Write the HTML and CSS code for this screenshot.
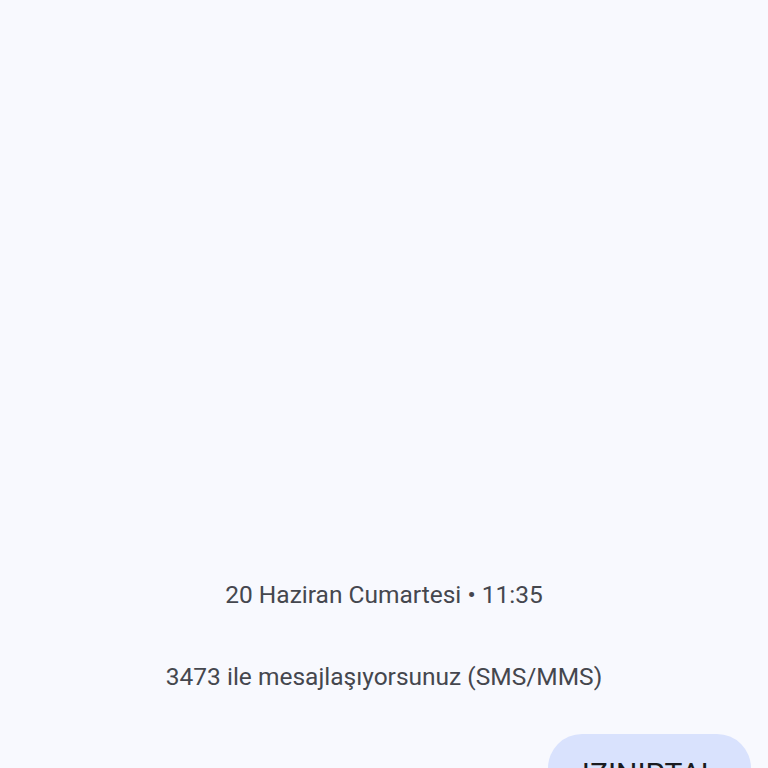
FILE: index.html
```html
<!DOCTYPE html>
<html lang="tr">
<head>
<meta charset="utf-8">
<link rel="stylesheet" href="styles.css">
</head>
<body>
<div class="screen">
  <div class="spacer"></div>
  <div class="date">20 Haziran Cumartesi • 11:35</div>
  <div class="info">3473 ile mesajlaşıyorsunuz (SMS/MMS)</div>
  <div class="row">
    <div class="bubble">IZINIPTAL</div>
  </div>
</div>
</body>
</html>
```
FILE: styles.css
```css
html, body {
  margin: 0;
  padding: 0;
  background: #f8f9fe;
}
.screen {
  width: 768px;
  height: 768px;
  overflow: hidden;
  display: flex;
  flex-direction: column;
  font-family: Roboto, "Noto Sans", sans-serif;
  color: #45474e;
}
.spacer {
  height: 578px;
  flex: none;
}
.date {
  text-align: center;
  font-size: 24.5px;
  line-height: 34px;
}
.info {
  margin-top: 48px;
  text-align: center;
  font-size: 24.5px;
  line-height: 34px;
}
.row {
  margin-top: 40px;
  display: flex;
  justify-content: flex-end;
  padding-right: 17px;
}
.bubble {
  background: #d9e2fd;
  color: #1a1b20;
  border-radius: 34px;
  padding: 20px 34px;
  font-size: 30px;
  line-height: 40px;
  flex: none;
}
```
